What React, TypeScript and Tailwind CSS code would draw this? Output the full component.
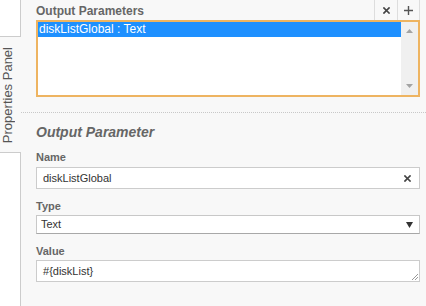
import React from 'react';

const ClearIcon: React.FC = () => (
  <svg width="7" height="7" viewBox="0 0 7 7" className="text-[#444]">
    <path d="M1 1 L6 6 M6 1 L1 6" stroke="currentColor" strokeWidth="1.7" strokeLinecap="square" />
  </svg>
);

const App: React.FC = () => {
  return (
    <div className="flex h-[306px] w-[426px] overflow-hidden bg-white font-['Liberation_Sans',Arial,sans-serif]">
      {/* Left tab strip */}
      <div className="flex w-[21px] shrink-0 flex-col">
        <div className="h-[36px] border-r border-[#cccccc] bg-white"></div>
        <div className="flex h-[117px] items-end border-y border-[#cccccc] bg-[#f8f8f8] pb-[9px]">
          <span className="rotate-180 text-[13px] leading-[15px] text-[#555] [writing-mode:vertical-rl]">
            Properties Panel
          </span>
        </div>
        <div className="flex-1 border-r border-[#cccccc] bg-white"></div>
      </div>

      {/* Panel */}
      <div className="flex flex-1 flex-col bg-[#f8f8f8]">
        {/* Output Parameters list */}
        <div className="pl-[15px] pr-[6px]">
          <div className="flex h-[20px] items-stretch">
            <div className="flex-1 pt-[4px] text-[12px] font-bold leading-[14px] text-[#666]">Output Parameters</div>
            <button className="flex w-[23px] items-center justify-center border-l border-[#dddddd]">
              <ClearIcon />
            </button>
            <button className="flex w-[23px] items-center justify-center border-x border-[#dddddd]">
              <svg width="9" height="9" viewBox="0 0 9 9">
                <path d="M4.5 0 V9 M0 4.5 H9" stroke="#555" strokeWidth="1.4" />
              </svg>
            </button>
          </div>
          <div className="flex h-[77px] border-2 border-[#eeb461] bg-white">
            <div className="flex-1">
              <div className="h-[15px] bg-[#1e90ff] pl-[1px] text-[12px] leading-[15px] text-white">
                diskListGlobal : Text
              </div>
            </div>
            <div className="flex w-[17px] flex-col items-center justify-between bg-[#f0f0f0] py-[7px]">
              <svg width="7" height="4" viewBox="0 0 7 4">
                <path d="M0 4 L3.5 0 L7 4 Z" fill="#a3a3a3" />
              </svg>
              <svg width="7" height="4" viewBox="0 0 7 4">
                <path d="M0 0 L3.5 4 L7 0 Z" fill="#a3a3a3" />
              </svg>
            </div>
          </div>
        </div>

        {/* Output Parameter details */}
        <div className="mt-[15px] border-t border-dotted border-[#c8c8c8] pl-[15px] pr-[6px]">
          <div className="pt-[11px] text-[14px] font-bold italic leading-[16px] text-[#666]">Output Parameter</div>

          <div className="mt-[11px] text-[11px] font-bold leading-[13px] text-[#666]">Name</div>
          <div className="mt-[3px] flex h-[22px] items-center border border-[#cccccc] bg-white pl-[6px] pr-[8px]">
            <span className="flex-1 text-[11px] text-[#333]">diskListGlobal</span>
            <ClearIcon />
          </div>

          <div className="mt-[11px] text-[11px] font-bold leading-[13px] text-[#666]">Type</div>
          <div className="mt-[2px] flex h-[19px] items-center border border-[#c8c8c8] border-b-[#a8a8a8] bg-white pl-[4px] pr-[6px]">
            <span className="flex-1 text-[11px] text-[#333]">Text</span>
            <svg width="7" height="6" viewBox="0 0 7 6">
              <path d="M0 0 L7 0 L3.5 6 Z" fill="#333" />
            </svg>
          </div>

          <div className="mt-[11px] text-[11px] font-bold leading-[13px] text-[#666]">Value</div>
          <div className="relative mt-[2px] flex h-[22px] items-center border border-[#cccccc] bg-white pl-[6px]">
            <span className="text-[11px] text-[#333]">#{'{'}diskList{'}'}</span>
            <svg width="7" height="7" viewBox="0 0 7 7" className="absolute bottom-[1px] right-[1px]">
              <path d="M1 7 L7 1 M4 7 L7 4" stroke="#999" strokeWidth="1" />
            </svg>
          </div>
        </div>
      </div>
    </div>
  );
};

export default App;
